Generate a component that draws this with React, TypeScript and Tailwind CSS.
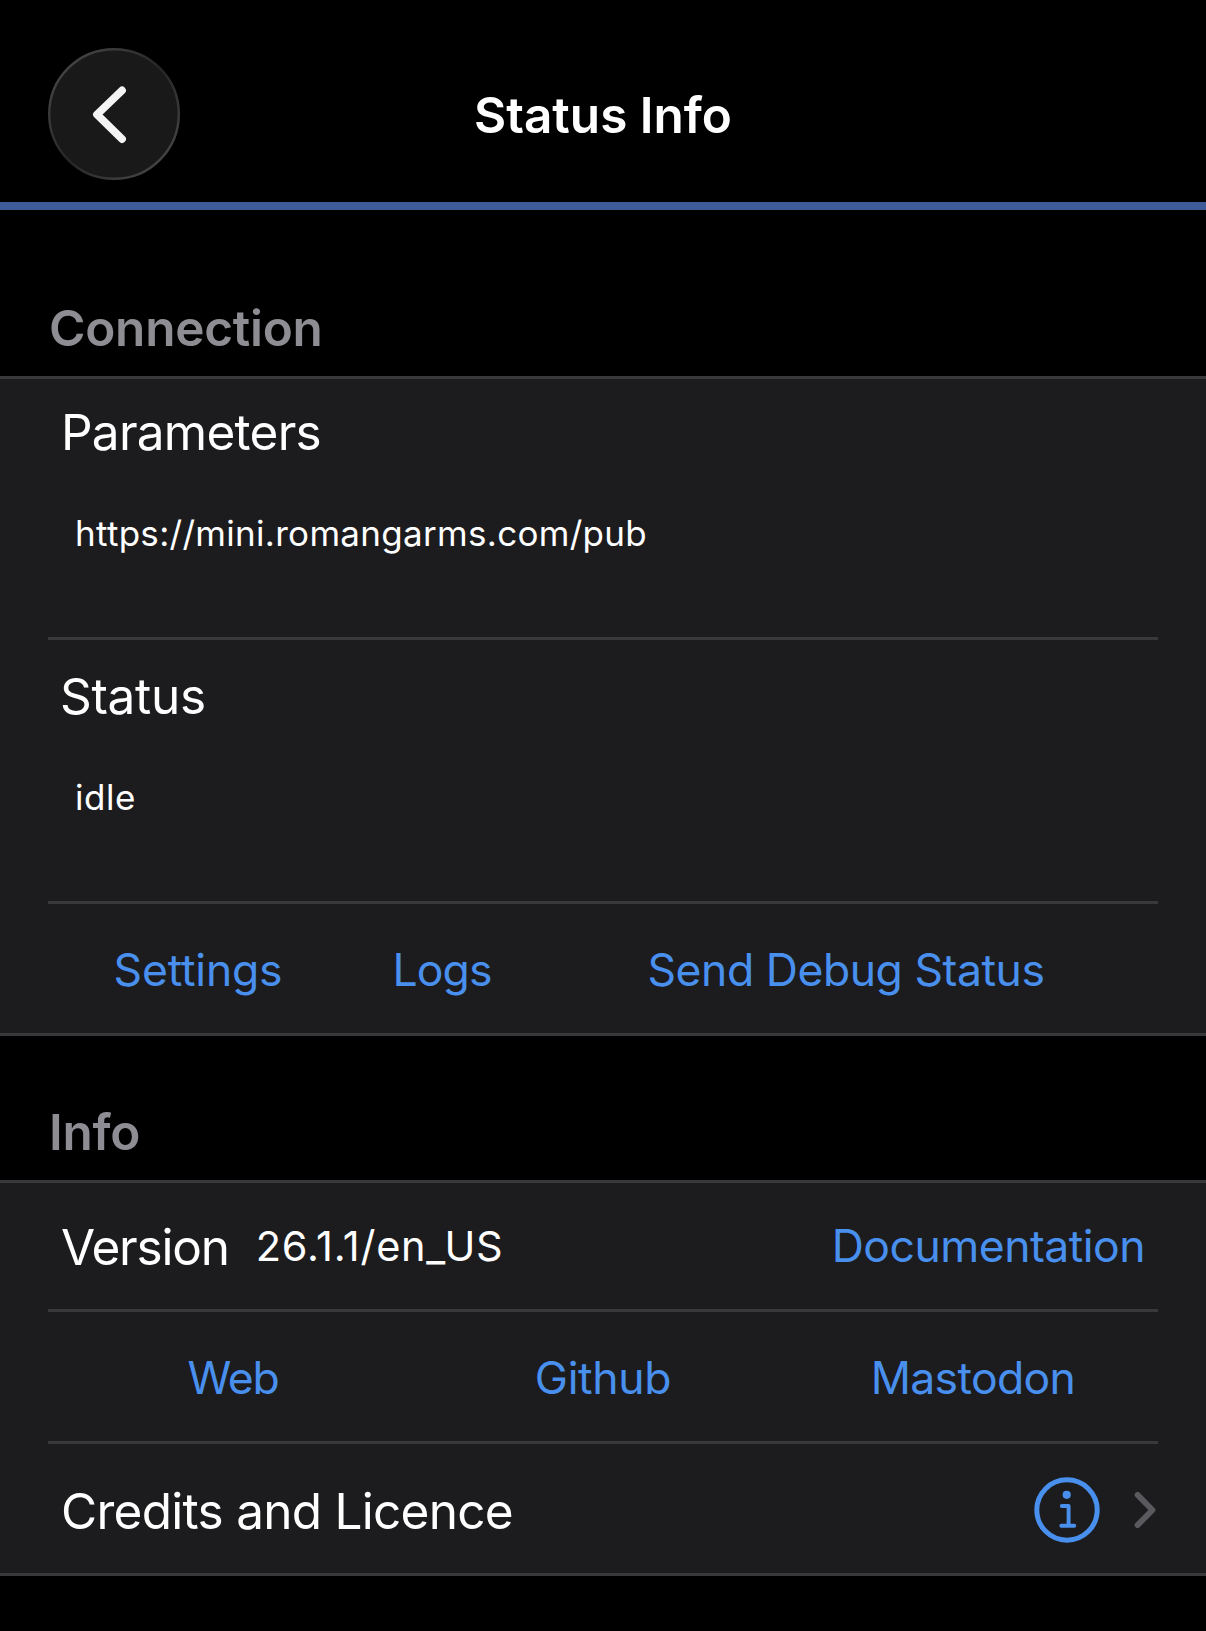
import type { ReactNode } from "react"

function SectionTitle({ children, className }: { children: ReactNode; className: string }) {
  return (
    <h2 className={`pl-[49px] text-[49.5px] font-semibold leading-[64px] tracking-[-0.25px] text-[#8d8d93] ${className}`}>
      {children}
    </h2>
  )
}

function Section({ children }: { children: ReactNode }) {
  return (
    <section className="border-y-[3px] border-[#38383a] bg-[#1c1c1e] px-12">
      <div className="divide-y-[3px] divide-[#38383a]">{children}</div>
    </section>
  )
}

function LinkButton({ label, className = "" }: { label: string; className?: string }) {
  return (
    <button className={`whitespace-nowrap text-[44.5px] leading-[64px] text-[#4990ee] ${className}`}>{label}</button>
  )
}

interface DetailProps {
  title: string
  value: string
  className: string
  titleClass: string
  valueClass: string
}

function Detail({ title, value, className, titleClass, valueClass }: DetailProps) {
  return (
    <div className={`text-white ${className}`}>
      <div className={`text-[49.5px] leading-[64px] ${titleClass}`}>{title}</div>
      <div className={`mt-[39px] text-[35px] leading-[60px] ${valueClass}`}>{value}</div>
    </div>
  )
}

function BackButton() {
  return (
    <button className="h-[132px] w-[132px]" aria-label="Back">
      <svg width="132" height="132" viewBox="0 0 132 132" fill="none">
        <defs>
          <linearGradient id="rim" x1="0.1" y1="0.1" x2="0.9" y2="0.9">
            <stop offset="0" stopColor="#464646" />
            <stop offset="0.5" stopColor="#262626" />
            <stop offset="1" stopColor="#464646" />
          </linearGradient>
        </defs>
        <circle cx="66" cy="66" r="64.8" fill="#191919" stroke="url(#rim)" strokeWidth="2.4" />
        <path d="M74 42.5 49 66.5 74 91" stroke="#f4f4f4" strokeWidth="7.8" strokeLinecap="round" strokeLinejoin="round" />
      </svg>
    </button>
  )
}

function InfoIcon() {
  return (
    <svg width="66" height="66" viewBox="0 0 66 66" fill="none" stroke="#4990ee">
      <circle cx="33" cy="33" r="30.2" strokeWidth="5" />
      <circle cx="32.7" cy="17.8" r="4.1" fill="#4990ee" stroke="none" />
      <path d="M27.8 29h6.8v19.5M27.3 48.8h13" strokeWidth="3.9" strokeLinecap="round" strokeLinejoin="round" />
    </svg>
  )
}

function Chevron() {
  return (
    <svg width="22" height="38" viewBox="0 0 22 38" fill="none">
      <path d="M3.7 4 18.4 19 3.7 34" stroke="#5a5a5e" strokeWidth="6" strokeLinecap="round" strokeLinejoin="round" />
    </svg>
  )
}

export default function App() {
  return (
    <div className="h-[1631px] w-[1206px] overflow-hidden bg-black font-['Inter',sans-serif]">
      <header className="grid h-[210px] grid-cols-[132px_1fr_132px] items-start border-b-8 border-[#3d5b98] px-12 pt-12">
        <BackButton />
        <h1 className="text-center text-[49.5px] font-semibold leading-[134px] text-white">Status Info</h1>
      </header>

      <SectionTitle className="h-[166px] pt-[86px]">Connection</SectionTitle>
      <Section>
        <Detail
          title="Parameters"
          value="https://mini.romangarms.com/pub"
          className="h-[261px] pl-[13px] pt-[21px]"
          titleClass="tracking-[-0.75px]"
          valueClass="pl-[14px] tracking-[0.3px]"
        />
        <Detail
          title="Status"
          value="idle"
          className="h-[264px] pl-3 pt-6"
          titleClass="tracking-[-0.3px]"
          valueClass="pl-[15px] tracking-[0.5px]"
        />
        <div className="flex h-[129px] items-center pt-[2px]">
          <LinkButton label="Settings" className="w-[300px] tracking-[-0.2px]" />
          <LinkButton label="Logs" className="w-[188px] tracking-[-0.9px]" />
          <LinkButton label="Send Debug Status" className="w-[620px] tracking-[-0.45px]" />
        </div>
      </Section>

      <SectionTitle className="h-[144px] pt-[64px]">Info</SectionTitle>
      <Section>
        <div className="flex h-[129px] items-center px-[13px] text-white">
          <span className="pt-[2px] text-[49.5px] leading-[64px] tracking-[-1.2px]">Version</span>
          <span className="ml-[27px] text-[41.5px] leading-[64px] tracking-[0.75px]">26.1.1/en_US</span>
          <LinkButton label="Documentation" className="ml-auto tracking-[-0.5px]" />
        </div>
        <div className="grid h-[132px] grid-cols-3 items-center pt-[2px]">
          <LinkButton label="Web" className="tracking-[-1.3px]" />
          <LinkButton label="Github" className="tracking-[-0.35px]" />
          <LinkButton label="Mastodon" className="tracking-[-0.65px]" />
        </div>
        <div className="flex h-[129px] items-center pl-[13px] pr-[2px] pt-[2px] text-white">
          <span className="pt-[2px] text-[49.5px] leading-[64px] tracking-[-0.72px]">Credits and Licence</span>
          <div className="ml-auto flex items-center gap-[34px]">
            <InfoIcon />
            <Chevron />
          </div>
        </div>
      </Section>
    </div>
  )
}
